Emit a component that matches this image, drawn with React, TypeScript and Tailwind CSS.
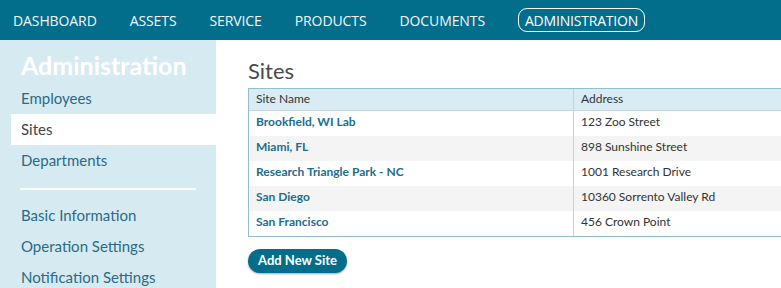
import React from 'react';

const navItems = ['DASHBOARD', 'ASSETS', 'SERVICE', 'PRODUCTS', 'DOCUMENTS'];

const sites = [
  { name: 'Brookfield, WI Lab', address: '123 Zoo Street' },
  { name: 'Miami, FL', address: '898 Sunshine Street' },
  { name: 'Research Triangle Park - NC', address: '1001 Research Drive' },
  { name: 'San Diego', address: '10360 Sorrento Valley Rd' },
  { name: 'San Francisco', address: '456 Crown Point' },
];

const SideLink: React.FC<{ label: string; active?: boolean }> = ({ label, active }) => (
  <div
    className={
      active
        ? 'ml-[11px] h-[31px] flex items-center pl-[10px] bg-white text-[#444]'
        : 'h-[31px] flex items-center pl-[21px] text-[#2b6a86]'
    }
  >
    {label}
  </div>
);

export default function App() {
  return (
    <div className="w-[781px] h-[288px] overflow-hidden bg-white flex flex-col" style={{ fontFamily: 'Lato, "Open Sans", sans-serif' }}>
      <nav className="h-[40px] bg-[#036e8b] flex items-center pl-[13px] shrink-0" style={{ fontFamily: '"Open Sans", sans-serif' }}>
        {navItems.map((item) => (
          <div key={item} className="mr-[33px] last:mr-[27px] text-[#f4f8f9] text-[14px] tracking-[-0.1px]">
            {item}
          </div>
        ))}
        <div className="h-[24px] px-[6px] flex items-center border border-white rounded-[9px] text-white text-[14px] tracking-[-0.2px]">
          ADMINISTRATION
        </div>
      </nav>
      <div className="flex flex-1 min-h-0">
        <aside className="w-[216px] shrink-0 bg-[#d6eaf2] text-[15px] pt-[10px]">
          <h2 className="pl-[21px] text-white font-bold text-[25px] leading-[30px] mb-[3px]">Administration</h2>
          <SideLink label="Employees" />
          <SideLink label="Sites" active />
          <SideLink label="Departments" />
          <div className="mx-[20px] mt-[12px] mb-[10px] h-[2px] bg-white" />
          <SideLink label="Basic Information" />
          <SideLink label="Operation Settings" />
          <SideLink label="Notification Settings" />
        </aside>
        <main className="flex-1 min-w-0 pl-[32px] pt-[16px]">
          <h1 className="text-[22px] leading-[30px] text-[#4a4a4a] mb-[2px]">Sites</h1>
          <div className="w-[620px] border border-[#93bfcc] text-[12px]">
            <div className="flex h-[22px] bg-[#d9ecf3] border-b border-[#c9d6da] text-[#333]">
              <div className="w-[325px] pl-[7px] pb-[1px] flex items-center border-r border-[#c9d1d4]">Site Name</div>
              <div className="flex-1 pl-[7px] pb-[1px] flex items-center">Address</div>
            </div>
            {sites.map((s, i) => (
              <div key={s.name} className={`flex h-[25px] ${i % 2 === 1 ? 'bg-[#f4f4f4]' : 'bg-white'}`}>
                <div className="w-[325px] pl-[7px] pb-[3px] flex items-center border-r border-[#c9d1d4] font-bold text-[#206d8c]">{s.name}</div>
                <div className="flex-1 pl-[7px] pb-[3px] flex items-center text-[#333]">{s.address}</div>
              </div>
            ))}
          </div>
          <button className="mt-[12px] h-[24px] w-[99px] rounded-full bg-[#036e8b] text-white text-[13px] font-bold pb-[1px] shadow-[0_1px_2px_rgba(0,0,0,0.35)]">
            Add New Site
          </button>
        </main>
      </div>
    </div>
  );
}
